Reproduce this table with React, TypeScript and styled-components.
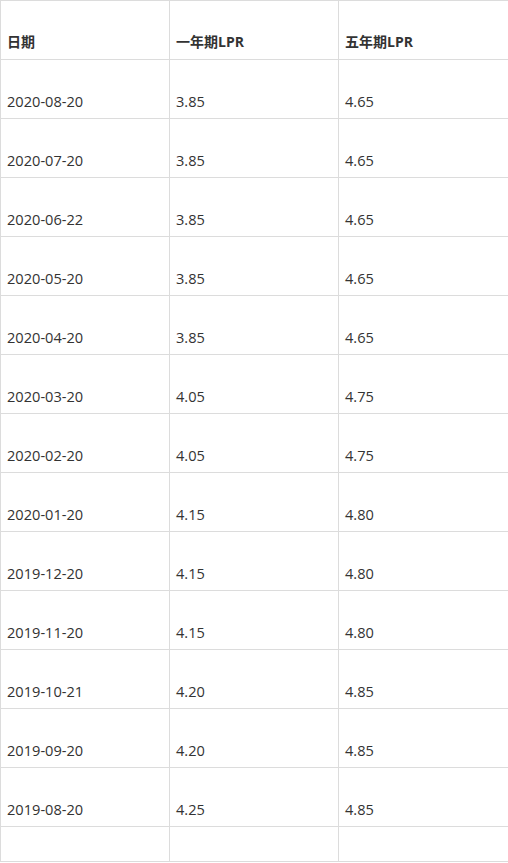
import React from "react";
import styled, { createGlobalStyle } from "styled-components";

const Global = createGlobalStyle`
  html, body { margin: 0; padding: 0; background: #fff; overflow: hidden; }
  body { font-family: "Open Sans", "Noto Sans CJK SC", sans-serif; }
`;

const Table = styled.table`
  border-collapse: collapse;
  table-layout: fixed;
  width: 510px;
  color: #333;
`;

const Col = styled.col<{ $w: number }>`
  width: ${(p) => p.$w}px;
`;

const Cell = styled.td<{ $head?: boolean }>`
  border: 1px solid #dcdcdc;
  padding: 32px 6px 8px;
  line-height: 18px;
  vertical-align: top;
  text-align: left;
  font-size: ${(p) => (p.$head ? "14px" : "14.6px")};
  font-weight: ${(p) => (p.$head ? 700 : 400)};
  font-family: "Open Sans", "Noto Sans CJK SC", sans-serif;
  white-space: nowrap;
`;

const EmptyCell = styled.td`
  border: 1px solid #dcdcdc;
  height: 34px;
  padding: 0;
`;

const rows: [string, string, string][] = [
  ["2020-08-20", "3.85", "4.65"],
  ["2020-07-20", "3.85", "4.65"],
  ["2020-06-22", "3.85", "4.65"],
  ["2020-05-20", "3.85", "4.65"],
  ["2020-04-20", "3.85", "4.65"],
  ["2020-03-20", "4.05", "4.75"],
  ["2020-02-20", "4.05", "4.75"],
  ["2020-01-20", "4.15", "4.80"],
  ["2019-12-20", "4.15", "4.80"],
  ["2019-11-20", "4.15", "4.80"],
  ["2019-10-21", "4.20", "4.85"],
  ["2019-09-20", "4.20", "4.85"],
  ["2019-08-20", "4.25", "4.85"],
];

export default function App() {
  return (
    <>
      <Global />
      <Table>
        <colgroup>
          <Col $w={169} />
          <Col $w={169} />
          <Col $w={172} />
        </colgroup>
        <tbody>
          <tr>
            <Cell $head>日期</Cell>
            <Cell $head>一年期LPR</Cell>
            <Cell $head>五年期LPR</Cell>
          </tr>
          {rows.map((r) => (
            <tr key={r[0]}>
              <Cell>{r[0]}</Cell>
              <Cell>{r[1]}</Cell>
              <Cell>{r[2]}</Cell>
            </tr>
          ))}
          <tr>
            <EmptyCell />
            <EmptyCell />
            <EmptyCell />
          </tr>
        </tbody>
      </Table>
    </>
  );
}
